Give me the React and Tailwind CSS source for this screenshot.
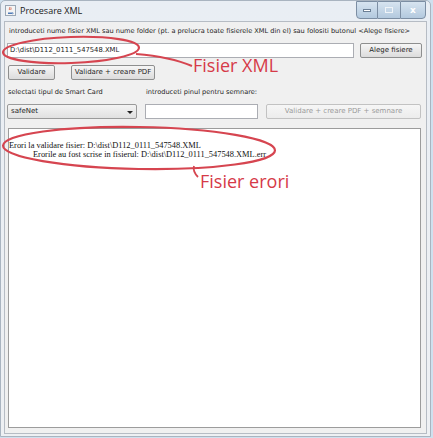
import React from "react";

const ui = { fontFamily: '"DejaVu Sans", "Liberation Sans", sans-serif' };
const serif = { fontFamily: '"Liberation Serif", "DejaVu Serif", serif' };
const title = { fontFamily: '"Open Sans", "Noto Sans", sans-serif' };

function JavaIcon() {
  return (
    <svg width="11" height="11" viewBox="0 0 11 11">
      <rect x="0.5" y="0.5" width="10" height="10" fill="#f4f4f4" stroke="#9aa7b5" />
      <path d="M3 7.5h4.5v1.5h-4.5z" fill="#4d7ab8" />
      <path d="M4.5 2c1 1-1 1.5 0 3M6 2.5c0.8 0.8-0.8 1.2 0 2.5" stroke="#d2553a" strokeWidth="0.8" fill="none" />
      <path d="M7.5 7.5c1 0 1 1.5 0 1.5" stroke="#4d7ab8" strokeWidth="0.7" fill="none" />
    </svg>
  );
}

function Btn({ children, className = "", disabled }) {
  return (
    <div
      className={`flex items-center justify-center rounded-[2px] border border-[#8e8f8f] bg-gradient-to-b from-[#f6f6f6] to-[#dcdcdc] text-[7px] ${disabled ? "text-[#9a9a9a] border-[#c2c2c2] from-[#f4f4f4] to-[#ececec]" : "text-[#1e1e1e]"} ${className}`}
      style={ui}
    >
      {children}
    </div>
  );
}

export default function App() {
  return (
    <div className="relative w-[433px] h-[438px] overflow-hidden bg-[#cfe0ee]">
      {/* window */}
      <div className="flex flex-col w-[431px] h-[437px] bg-gradient-to-b from-[#e9eef4] to-[#eef0f3] border border-[#a9b4c0] rounded-t-[5px]">
        {/* title bar */}
        <div className="flex h-[20px] items-start shrink-0">
          <div className="flex items-center gap-[4px] pl-[4px] pt-[4px]">
            <JavaIcon />
            <span className="text-[9px] text-[#1a1a1a] leading-none" style={title}>Procesare XML</span>
          </div>
          <div className="ml-auto mr-[4px] flex h-[18px]">
            <div className="w-[22px] border border-[#7c8ea3] rounded-bl-[4px] bg-gradient-to-b from-[#d7e4f0] to-[#b3c9de] flex items-center justify-center">
              <div className="w-[8px] h-[3px] bg-white border border-[#6b7f95]" />
            </div>
            <div className="w-[22px] border-y border-[#7c8ea3] bg-gradient-to-b from-[#d7e4f0] to-[#b3c9de] flex items-center justify-center">
              <div className="w-[8px] h-[6px] border border-[#f0f4f8]" />
            </div>
            <div className="w-[26px] border border-[#7c8ea3] rounded-br-[4px] bg-gradient-to-b from-[#d7e4f0] to-[#b3c9de] flex items-center justify-center">
              <span className="text-[9px] font-bold text-white leading-none" style={ui}>x</span>
            </div>
          </div>
        </div>

        {/* client area */}
        <div className="flex flex-col flex-1 mx-[3px] mb-[2px] bg-[#f0f0f0] border border-[#b6bcc4] px-[2px] pt-[4px] pb-[5px]">
          <div className="h-[12px] flex items-center pl-[2px] text-[6.6px] text-[#1e1e1e] whitespace-nowrap" style={ui}>
            introduceti nume fisier XML sau nume folder (pt. a prelucra toate fisierele XML din el) sau folositi butonul &lt;Alege fisiere&gt;
          </div>
          <div className="flex items-center mt-[4px] h-[16px]">
            <div className="w-[347px] h-[15px] bg-white border border-[#abadb3] flex items-center pl-[2px] text-[6.8px] text-[#1e1e1e]" style={ui}>
              D:\dist\D112_0111_547548.XML
            </div>
            <Btn className="ml-[6px] w-[62px] h-[15px]">Alege fisiere</Btn>
          </div>
          <div className="flex items-center mt-[7px] h-[15px] pl-[1px] gap-[16px]">
            <Btn className="w-[47px] h-[15px] border-[#3c7fb1] from-[#eaf6fd] to-[#bee6fd]">Validare</Btn>
            <Btn className="w-[84px] h-[15px]">Validare + creare PDF</Btn>
          </div>
          <div className="flex items-center mt-[8px] h-[10px] pl-[1px] text-[6.6px] text-[#1e1e1e]" style={ui}>
            <span className="w-[138px]">selectati tipul de Smart Card</span>
            <span>introduceti pinul pentru semnare:</span>
          </div>
          <div className="flex items-center mt-[6px] h-[15px] pl-[0px]">
            <div className="relative w-[130px] h-[15px] border border-[#9a9a9a] rounded-[2px] bg-gradient-to-b from-[#f4f4f4] to-[#e0e0e0] flex items-center pl-[3px] text-[7px] text-[#1e1e1e]" style={ui}>
              safeNet
              <span className="absolute right-[3px] top-[6px] w-0 h-0 border-x-[3px] border-x-transparent border-t-[3px] border-t-[#222]" />
            </div>
            <div className="ml-[8px] w-[113px] h-[15px] bg-white border border-[#abadb3]" />
            <Btn disabled className="ml-[8px] w-[155px] h-[15px]">Validare + creare PDF + semnare</Btn>
          </div>
          <div className="mt-[9px] ml-[1px] mr-[3px] flex-1 bg-white border border-[#9c9c9c] pt-[12px] pl-[0px] text-[8.4px] leading-[9px] text-[#111]" style={serif}>
            <div>Erori la validare fisier: D:\dist\D112_0111_547548.XML</div>
            <div className="pl-[24px]">Erorile au fost scrise in fisierul: D:\dist\D112_0111_547548.XML.err</div>
          </div>
        </div>
      </div>

      {/* annotations */}
      <svg className="absolute left-0 top-0 pointer-events-none" width="433" height="438" viewBox="0 0 433 438">
        <ellipse cx="71" cy="50" rx="68" ry="13" fill="none" stroke="#d64550" strokeWidth="2.2" transform="rotate(-2 71 50)" />
        <path d="M136 54 C160 56 178 60 192 66" fill="none" stroke="#d64550" strokeWidth="2" />
        <ellipse cx="139" cy="148" rx="136" ry="21" fill="none" stroke="#d64550" strokeWidth="2.2" transform="rotate(1 139 148)" />
        <path d="M194 166 C193 170 195 174 198 177" fill="none" stroke="#d64550" strokeWidth="1.8" />
      </svg>
      <div className="absolute left-[193px] top-[56px] text-[18px] leading-none text-[#d63a48]" style={title}>Fisier XML</div>
      <div className="absolute left-[200px] top-[172px] text-[18px] leading-none text-[#d63a48]" style={title}>Fisier erori</div>
    </div>
  );
}
